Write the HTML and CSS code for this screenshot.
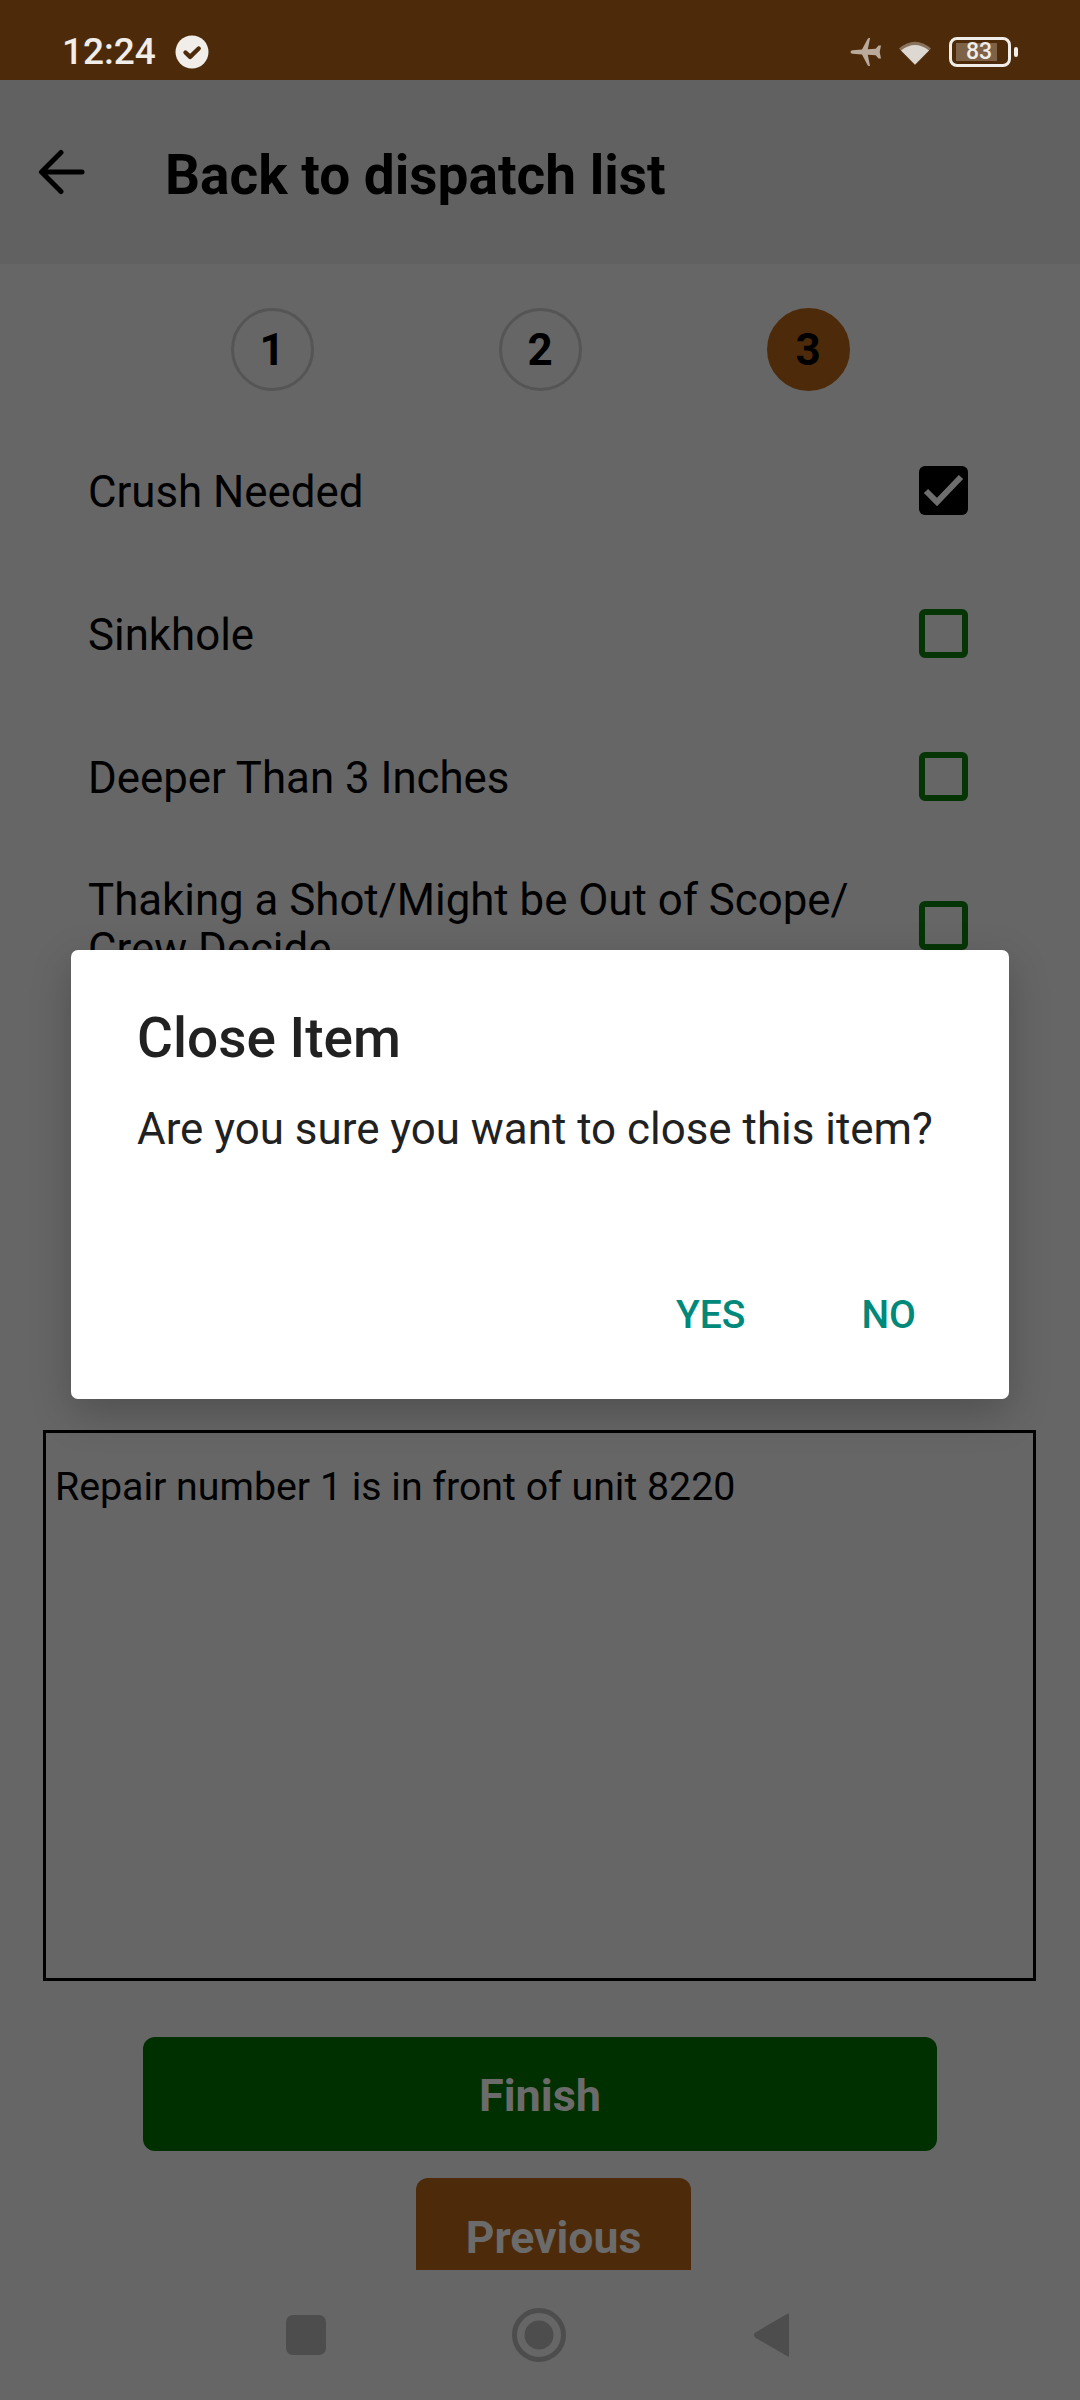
FILE: index.html
```html
<!DOCTYPE html>
<html lang="en">
<head>
<meta charset="utf-8">
<title>Close Item</title>
<link rel="stylesheet" href="styles.css">
</head>
<body>
<div class="screen">
  <header class="status">
    <div class="status-left">
      <span class="time">12:24</span>
      <svg class="status-check" width="34" height="34" viewBox="0 0 34 34"><circle cx="17" cy="17" r="16.5" fill="#f1ede9"/><path d="M10.500 17.500l4.600 4.400 8.600-8.400" fill="none" stroke="#4d2b0a" stroke-width="4.400" stroke-linecap="round" stroke-linejoin="round"/></svg>
    </div>
    <div class="status-right">
      <svg class="plane" width="32" height="28" viewBox="0 0 32 28"><path d="M0.500 14q0-1.600 2-1.800l9.500-.7L17.600 1q.5-.9 1.500-.9h1L17.800 11.200l7.900-.5 2.800-3.200H31l-1.300 6.500 1.300 6.500h-2.500l-2.800-3.200-7.900-.5 2.200 11.100h-1q-1 0-1.500-.9L12 16.500l-9.500-.7q-2-.2-2-1.800z" fill="#b9aa9c"/></svg>
      <svg class="wifi" width="34" height="26" viewBox="0 0 34 26"><path d="M1 9.500Q17-4 33 9.500L17 26z" fill="#8a735d"/><path d="M3 11.500Q17 .5 31 11.500L17 25.500z" fill="#ded8d2"/></svg>
      <div class="battery"><div class="battery-body"><div class="battery-fill"></div><span class="battery-num">83</span></div><div class="battery-nub"></div></div>
    </div>
  </header>

  <main class="content">
    <div class="toolbar">
      <svg class="back" width="48" height="48" viewBox="0 0 48 48"><path d="M44 24H4M23 4.500L3.500 24 23 43.500" fill="none" stroke="#000" stroke-width="5" stroke-linecap="round" stroke-linejoin="round"/></svg>
      <h1 class="title">Back to dispatch list</h1>
    </div>

    <div class="stepper">
      <span class="step">1</span>
      <span class="step">2</span>
      <span class="step step-active">3</span>
    </div>

    <ul class="checklist">
      <li class="check-row"><span class="check-label">Crush Needed</span>
        <span class="box box-on"><svg width="49" height="49" viewBox="0 0 49 49"><path d="M7 25l11 11L42 11" fill="none" stroke="#6e6e6e" stroke-width="6"/></svg></span></li>
      <li class="check-row"><span class="check-label">Sinkhole</span><span class="box"></span></li>
      <li class="check-row"><span class="check-label">Deeper Than 3 Inches</span><span class="box"></span></li>
      <li class="check-row check-row-tall"><span class="check-label">Thaking a Shot/Might be Out of Scope/ Crew Decide</span><span class="box"></span></li>
    </ul>

    <div class="notes">Repair number 1 is in front of unit 8220</div>

    <div class="actions">
      <button class="btn btn-finish">Finish</button>
      <button class="btn btn-previous">Previous</button>
    </div>
  </main>

  <nav class="navbar">
    <svg class="nav-square" width="40" height="40" viewBox="0 0 40 40"><rect width="40" height="40" rx="7" fill="#4d4d4d"/></svg>
    <svg class="nav-home" width="54" height="54" viewBox="0 0 54 54"><circle cx="27" cy="27" r="24.500" fill="none" stroke="#4d4d4d" stroke-width="5"/><circle cx="27" cy="27" r="14.500" fill="#4d4d4d"/></svg>
    <svg class="nav-back" width="37" height="46" viewBox="0 0 37 46"><path d="M36 2.500v41q0 2-2 .6L2 25.500q-2-2.500 0-4.800L34 2q2-1.200 2 .5z" fill="#4d4d4d"/></svg>
  </nav>

  <div class="dialog" role="dialog">
    <h2 class="dialog-title">Close Item</h2>
    <p class="dialog-body">Are you sure you want to close this item?</p>
    <div class="dialog-actions">
      <span class="dialog-btn">YES</span>
      <span class="dialog-btn">NO</span>
    </div>
  </div>
</div>
</body>
</html>
```

FILE: styles.css
```css
* { box-sizing: border-box; }
html, body { margin: 0; padding: 0; }
body { font-family: Roboto, "Liberation Sans", sans-serif; background: #666; }

.screen {
  position: relative;
  width: 1080px;
  height: 2400px;
  display: flex;
  flex-direction: column;
  overflow: hidden;
  background: #666;
}

/* status bar */
.status {
  flex: 0 0 80px;
  background: #4d2b0a;
  display: flex;
  justify-content: space-between;
  align-items: flex-start;
  padding: 35px 62px 0 62px;
  color: #f1ede9;
}
.status-left { display: flex; align-items: center; gap: 19px; }
.time { font-size: 37px; line-height: 34px; font-weight: 500; }
.status-check { display: block; }
.status-right { display: flex; align-items: center; margin-top: 2px; }
.plane { display: block; margin-right: 16px; }
.wifi { display: block; margin-right: 17px; }
.battery { display: flex; align-items: center; gap: 3px; }
.battery-body {
  position: relative;
  width: 62px;
  height: 30px;
  border: 3px solid #f1ede9;
  border-radius: 8px;
  display: flex;
  align-items: center;
  justify-content: center;
}
.battery-fill { position: absolute; left: 4px; top: 3px; bottom: 3px; width: 41px; background: #7d6248; }
.battery-num { position: relative; font-size: 23px; line-height: 24px; font-weight: 500; left: -1px; }
.battery-nub { width: 4px; height: 10px; background: #f1ede9; border-radius: 2px; }

/* scrolling content */
.content { flex: 0 0 2190px; overflow: hidden; }

.toolbar {
  height: 184px;
  background: #616161;
  display: flex;
  align-items: center;
  padding: 0 0 4px 38px;
}
.back { display: block; margin-top: 4px; }
.title {
  margin: 10px 0 0 79px;
  font-size: 55px;
  line-height: 60px;
  font-weight: 700;
  color: #000;
}

.stepper {
  display: flex;
  justify-content: center;
  gap: 185px;
  padding-top: 44px;
}
.step {
  width: 83px;
  height: 83px;
  border: 3px solid #555;
  border-radius: 50%;
  display: flex;
  align-items: center;
  justify-content: center;
  font-size: 44px;
  font-weight: 700;
  color: #000;
}
.step-active { background: #4d2b0a; border-color: #4d2b0a; }

.checklist { list-style: none; margin: 0; padding: 28px 0 0 88px; height: 1039px; }
.check-row {
  width: 880px;
  height: 143px;
  display: flex;
  align-items: center;
  justify-content: space-between;
}
.check-row-tall { height: 154px; }
.check-label {
  padding-top: 4px;
  font-size: 43.800px;
  line-height: 49px;
  color: #000;
  width: 770px;
}
.check-row-tall .check-label { padding-top: 0; }
.box {
  flex: 0 0 49px;
  width: 49px;
  height: 49px;
  border: 6px solid #053505;
  border-radius: 6px;
}
.box-on { background: #000; border: 0; }
.box-on svg { display: block; }

.notes {
  width: 993px;
  height: 551px;
  margin-left: 43px;
  padding: 29px 9px;
  border: 3px solid #000;
  font-size: 39.300px;
  line-height: 50px;
  color: #000;
}

.actions { display: flex; flex-direction: column; align-items: center; }
.btn {
  border: 0;
  font-family: inherit;
  font-size: 45px;
  font-weight: 700;
  color: #6b6b6b;
  padding: 0;
}
.btn-finish {
  margin-top: 56px;
  width: 794px;
  height: 114px;
  padding-top: 3px;
  background: #003000;
  border-radius: 12px;
}
.btn-previous {
  flex: none;
  margin: 27px 0 0 27px;
  width: 275px;
  height: 92px;
  padding-top: 28px;
  font-size: 44.500px;
  background: #4d2b0a;
  border-radius: 12px 12px 0 0;
}

/* navigation bar */
.navbar {
  flex: 0 0 130px;
  position: relative;
  display: flex;
  align-items: center;
  padding-left: 286px;
  padding-bottom: 1px;
}
.nav-square, .nav-home, .nav-back { display: block; flex: none; }
.nav-home { margin-left: 186px; }
.nav-back { margin-left: 187px; }

/* dialog */
.dialog {
  position: absolute;
  left: 71px;
  top: 950px;
  width: 938px;
  height: 449px;
  background: #fff;
  border-radius: 7px;
  box-shadow: 0 14px 40px rgba(0, 0, 0, 0.22);
  padding: 56px 66px 0;
}
.dialog-title {
  margin: 0;
  font-size: 55px;
  line-height: 64px;
  font-weight: 500;
  color: #212121;
}
.dialog-body {
  margin: 34px 0 0;
  font-size: 43.900px;
  line-height: 50px;
  color: #212121;
  white-space: nowrap;
}
.dialog-actions {
  display: flex;
  justify-content: flex-end;
  gap: 116px;
  margin: 139px 27px 0 0;
}
.dialog-btn {
  font-size: 39px;
  line-height: 44px;
  font-weight: 500;
  color: #00897b;
}
```
